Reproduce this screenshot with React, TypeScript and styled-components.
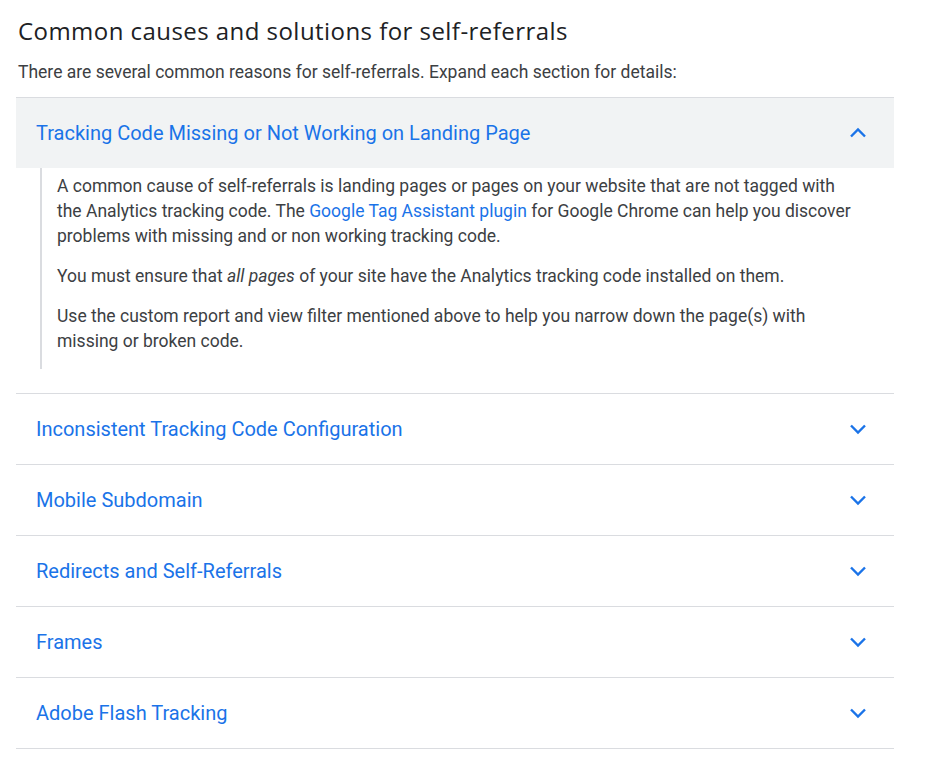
import styled, { createGlobalStyle } from 'styled-components';

const GlobalStyle = createGlobalStyle`
  body {
    margin: 0;
    background: #ffffff;
    font-family: Roboto, 'Liberation Sans', Arial, sans-serif;
  }
`;

type Section = {
  title: string;
  open?: boolean;
};

const sections: Section[] = [
  { title: 'Tracking Code Missing or Not Working on Landing Page', open: true },
  { title: 'Inconsistent Tracking Code Configuration' },
  { title: 'Mobile Subdomain' },
  { title: 'Redirects and Self-Referrals' },
  { title: 'Frames' },
  { title: 'Adobe Flash Tracking' },
];

const Chevron = ({ up }: { up?: boolean }) => (
  <svg width="24" height="24" viewBox="0 0 24 24" fill="none">
    <path
      d={up ? 'M5 15.5l7-7 7 7' : 'M5 8.5l7 7 7-7'}
      stroke="#1a73e8"
      strokeWidth="2.4"
      strokeLinecap="butt"
      strokeLinejoin="miter"
    />
  </svg>
);

const App = () => {
  return (
    <Page>
      <GlobalStyle />
      <Title>Common causes and solutions for self-referrals</Title>
      <Intro>There are several common reasons for self-referrals. Expand each section for details:</Intro>
      <Accordion>
        {sections.map((s) => (
          <Item key={s.title}>
            <Header $open={s.open}>
              <HeaderText>{s.title}</HeaderText>
              <Chevron up={s.open} />
            </Header>
            {s.open && (
              <Body>
                <Para>
                  A common cause of self-referrals is landing pages or pages on your website that are not tagged with
                  the Analytics tracking code. The <Link>Google Tag Assistant plugin</Link> for Google Chrome can help
                  you discover problems with missing and or non working tracking code.
                </Para>
                <Para>
                  You must ensure that <em>all pages</em> of your site have the Analytics tracking code installed on
                  them.
                </Para>
                <Para>
                  Use the custom report and view filter mentioned above to help you narrow down the page(s) with
                  missing or broken code.
                </Para>
              </Body>
            )}
          </Item>
        ))}
      </Accordion>
    </Page>
  );
};

const Page = styled.main`
  padding: 16px 43px 0 16px;
`;

const Title = styled.h2`
  margin: 0 0 0 2px;
  font-family: 'Open Sans', Roboto, sans-serif;
  font-weight: 400;
  font-size: 24px;
  line-height: 30px;
  letter-spacing: 0.45px;
  color: #202124;
`;

const Intro = styled.p`
  margin: 14px 0 0 2px;
  font-size: 17.5px;
  line-height: 24px;
  color: #3c4043;
`;

const Accordion = styled.div`
  margin-top: 13px;
  border-top: 1px solid #dadce0;
`;

const Item = styled.section`
  border-bottom: 1px solid #dadce0;
`;

const Header = styled.div<{ $open?: boolean }>`
  display: flex;
  align-items: center;
  justify-content: space-between;
  height: 70px;
  padding: 0 24px 0 20px;
  background: ${(p) => (p.$open ? '#f1f3f4' : 'transparent')};
`;

const HeaderText = styled.h3`
  margin: 0;
  font-size: 20px;
  font-weight: 400;
  color: #1a73e8;
`;

const Body = styled.div`
  margin: 0 24px 24px 24px;
  padding: 6px 13px 15px 15px;
  border-left: 2px solid #dadce0;
`;

const Para = styled.p`
  margin: 0 0 15px;
  font-size: 17.5px;
  line-height: 25px;
  color: #3c4043;

  &:last-child {
    margin-bottom: 0;
  }
`;

const Link = styled.a`
  color: #1a73e8;
  text-decoration: none;
`;

export default App;
